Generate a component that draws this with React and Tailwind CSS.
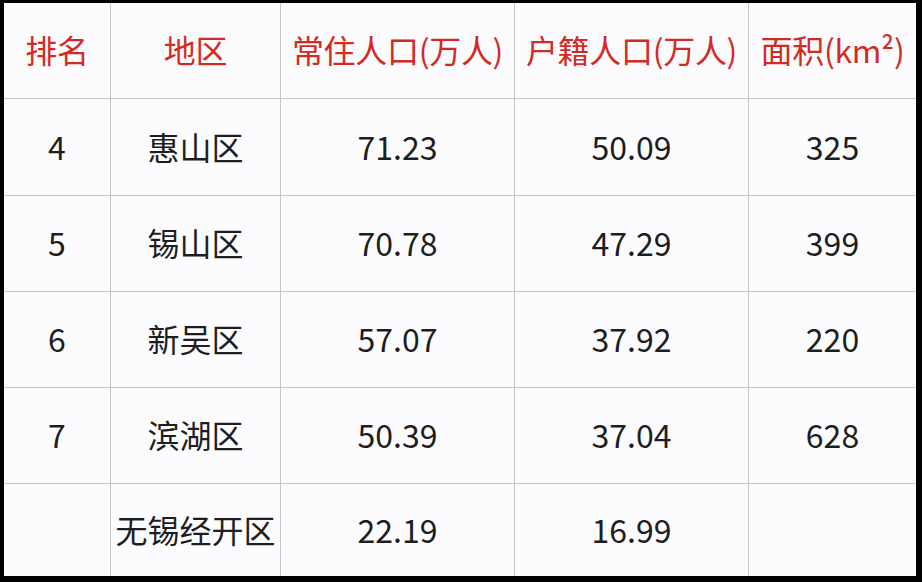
import React from "react";

const header = ["排名", "地区", "常住人口(万人)", "户籍人口(万人)", "面积(km²)"];

const rows = [
  ["4", "惠山区", "71.23", "50.09", "325"],
  ["5", "锡山区", "70.78", "47.29", "399"],
  ["6", "新吴区", "57.07", "37.92", "220"],
  ["7", "滨湖区", "50.39", "37.04", "628"],
  ["", "无锡经开区", "22.19", "16.99", ""],
];

const font = {
  fontFamily: '"Noto Sans CJK SC", "Noto Sans", sans-serif',
};

export default function App() {
  return (
    <div className="w-[922px] h-[582px] bg-white" style={font}>
      <div className="w-full h-full border-black border-t-[3px] border-l-[4px] border-r-[6px] border-b-[6px]">
        <div className="grid grid-cols-[106px_169px_233px_233px_167px] grid-rows-[95px_96px_95px_95px_95px_92px] gap-px bg-[#c6c6c8] h-full">
          {header.map((h, i) => (
            <div
              key={i}
              className="bg-[#fcfcfe] flex items-center justify-center pb-[3px] text-[32px] text-[#d42a24] tracking-[-0.3px]"
            >
              {h}
            </div>
          ))}
          {rows.map((r, ri) =>
            r.map((c, ci) => (
              <div
                key={ri + "-" + ci}
                className="bg-[#fcfcfe] flex items-center justify-center pb-[3px] text-[32px] text-[#1e1e1e]"
              >
                {c}
              </div>
            ))
          )}
        </div>
      </div>
    </div>
  );
}
